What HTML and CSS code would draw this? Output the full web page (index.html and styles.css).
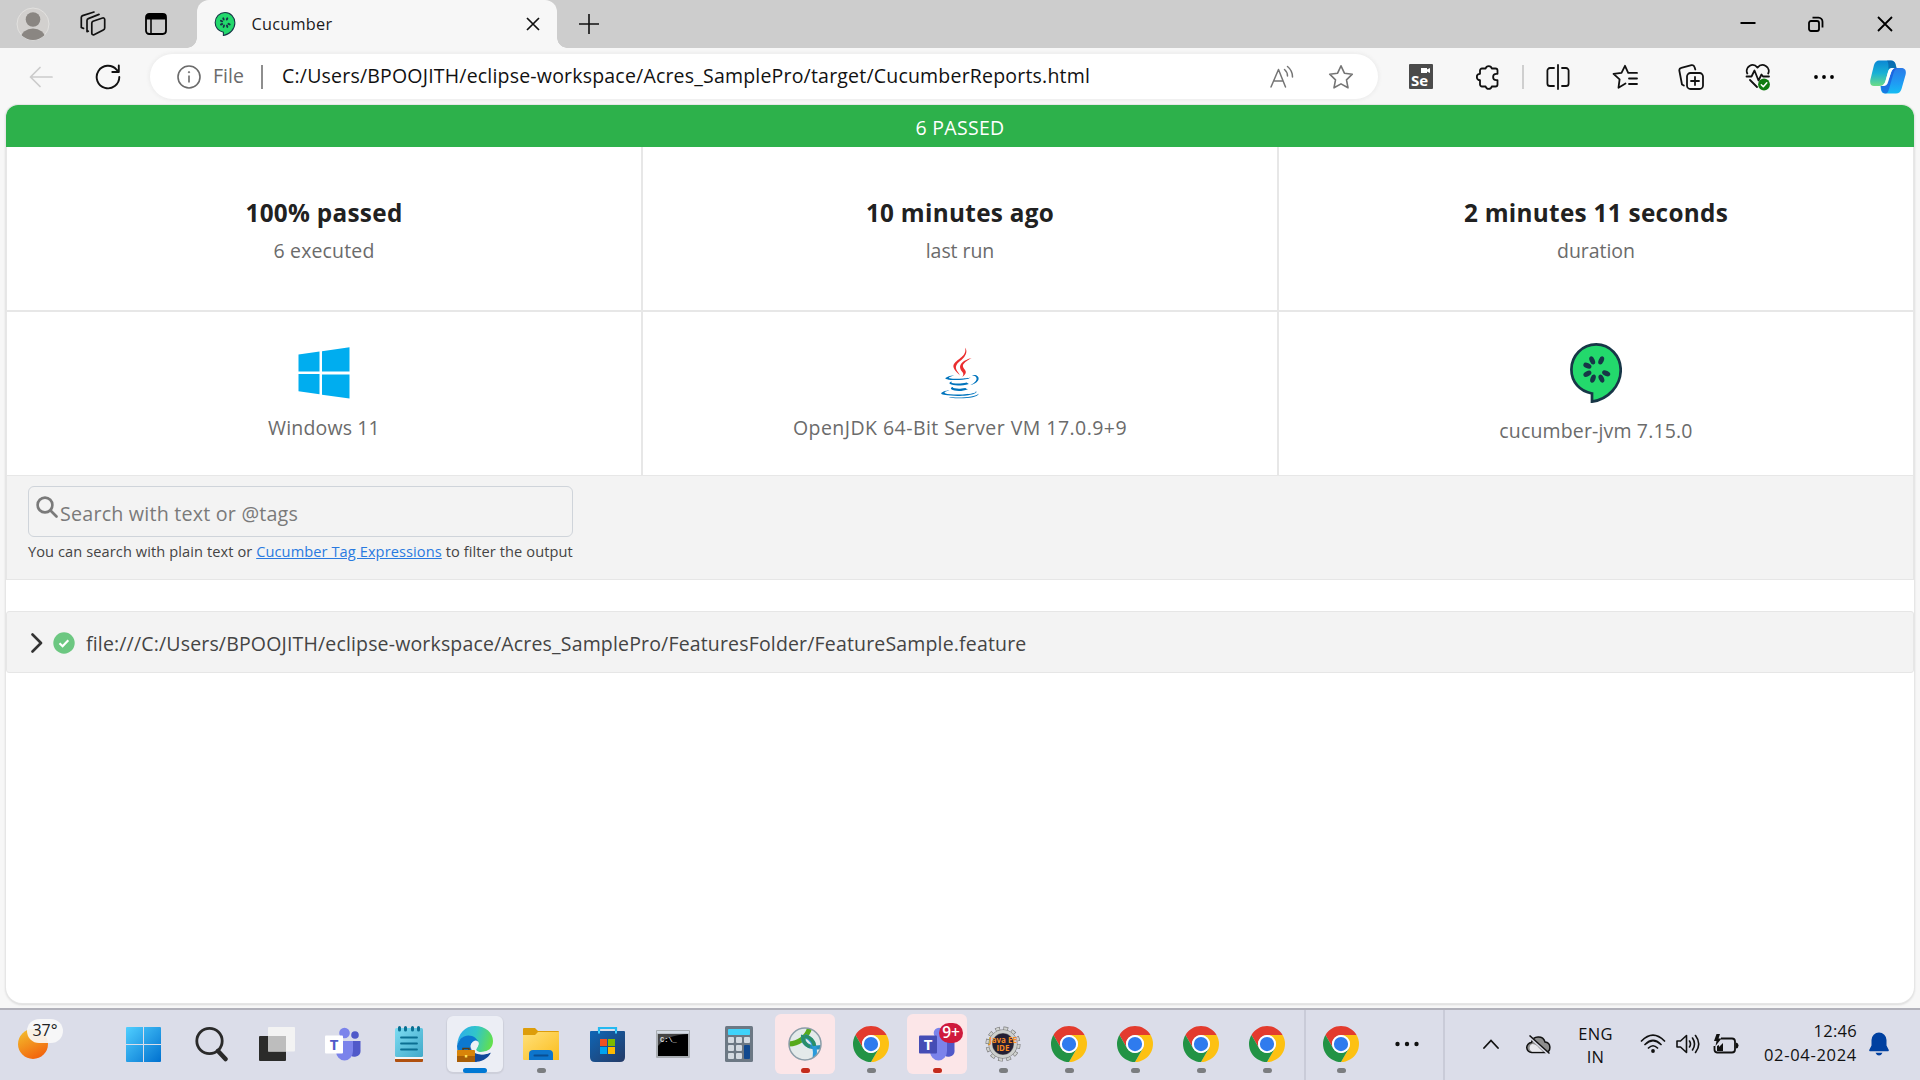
FILE: index.html
```html
<!DOCTYPE html>
<html lang="en">
<head>
<meta charset="utf-8">
<title>Cucumber</title>
<link rel="stylesheet" href="styles.css">
</head>
<body>
<svg class="defs" width="0" height="0" aria-hidden="true">
  <defs>
    <linearGradient id="winBlue" x1="0" y1="0" x2="1" y2="1"><stop offset="0" stop-color="#50cfff"/><stop offset="1" stop-color="#0070cf"/></linearGradient>
    <linearGradient id="sun" x1="0.2" y1="0" x2="0.7" y2="1"><stop offset="0" stop-color="#f3bd2c"/><stop offset="1" stop-color="#f2600c"/></linearGradient>
    <linearGradient id="folder" x1="0" y1="0" x2="1" y2="1"><stop offset="0" stop-color="#ffe07a"/><stop offset="1" stop-color="#fbbd1d"/></linearGradient>
    <linearGradient id="store" x1="0" y1="0" x2="1" y2="1"><stop offset="0" stop-color="#0f66b6"/><stop offset="1" stop-color="#243a66"/></linearGradient>
    <linearGradient id="edgeTop" x1="0" y1="0.3" x2="1" y2="0.5"><stop offset="0" stop-color="#2cadec"/><stop offset="0.5" stop-color="#31c5c9"/><stop offset="1" stop-color="#63e04c"/></linearGradient>
    <linearGradient id="note" x1="0" y1="0" x2="1" y2="1"><stop offset="0" stop-color="#7ddcf2"/><stop offset="1" stop-color="#41a9c9"/></linearGradient>
    <linearGradient id="copA" x1="0" y1="0" x2="0" y2="1"><stop offset="0" stop-color="#0a87d4"/><stop offset="0.5" stop-color="#19b1d5"/><stop offset="1" stop-color="#6cdc86"/></linearGradient>
    <linearGradient id="copB" x1="0" y1="0" x2="0" y2="1"><stop offset="0" stop-color="#2b7be8"/><stop offset="0.6" stop-color="#1f9cf4"/><stop offset="1" stop-color="#15bdf3"/></linearGradient>
    <symbol id="chrome" viewBox="0 0 48 48">
      <path fill="#e33b2e" d="M24 12H44.78A24 24 0 0 0 3.22 12L13.61 30A12 12 0 0 1 24 12z"/>
      <path fill="#fdc112" d="M34.39 30 24 48A24 24 0 0 0 44.78 12H24A12 12 0 0 1 34.39 30z"/>
      <path fill="#229345" d="M13.61 30 3.22 12A24 24 0 0 0 24 48L34.39 30A12 12 0 0 1 13.61 30z"/>
      <circle cx="24" cy="24" r="12" fill="#fff"/><circle cx="24" cy="24" r="9.5" fill="#2f7bee"/>
    </symbol>
    <symbol id="cuke" viewBox="0 0 52 60">
      <path d="M22 50.5C10 48.5 1.4 39 1.4 26.5 1.4 12.5 12.5 1.4 26.2 1.4 40 1.4 50.7 13 50.7 27 50.7 43 38 56.5 22 58.6Z" fill="#23d96c" stroke="#173647" stroke-width="2.7"/>
      <g fill="#173647">
        <ellipse cx="22.2" cy="17.4" rx="4.3" ry="2.5" transform="rotate(66 22.2 17.4)"/>
        <ellipse cx="31.2" cy="17.4" rx="4.3" ry="2.5" transform="rotate(-66 31.2 17.4)"/>
        <ellipse cx="17.4" cy="22.7" rx="4.3" ry="2.6" transform="rotate(25 17.4 22.7)"/>
        <ellipse cx="17.4" cy="30.7" rx="4.3" ry="2.6" transform="rotate(-28 17.4 30.7)"/>
        <ellipse cx="23" cy="35.6" rx="4.3" ry="2.5" transform="rotate(-70 23 35.6)"/>
        <ellipse cx="31.4" cy="35.6" rx="4.3" ry="2.5" transform="rotate(66 31.4 35.6)"/>
        <ellipse cx="36.2" cy="30.3" rx="4.3" ry="2.6" transform="rotate(25 36.2 30.3)"/>
      </g>
    </symbol>
  </defs>
</svg>

<header class="tabstrip">
  <span class="slot avatar-slot"><svg width="34" height="34" viewBox="0 0 34 34"><circle cx="17" cy="17" r="16" fill="#d2d0ce" stroke="#e2e1df" stroke-width="1"/><clipPath id="av"><circle cx="17" cy="17" r="16"/></clipPath><g fill="#8a8682" clip-path="url(#av)"><circle cx="17" cy="12.5" r="7.3"/><ellipse cx="17" cy="31" rx="12" ry="9.5"/></g></svg></span>
  <span class="slot work-slot"><svg width="26" height="26" viewBox="0 0 26 26" fill="none" stroke="#111" stroke-width="1.7" stroke-linejoin="round" stroke-linecap="round"><path d="M13 10.3 22.5 7a1.6 1.6 0 0 1 2.2 1.5V17a2 2 0 0 1-1.4 1.9L14 23.8a1.6 1.6 0 0 1-2.2-1.5V12a2 2 0 0 1 1.2-1.7z"/><path d="M8.3 20.2 7 20.6V9.5A2 2 0 0 1 8.3 7.6L19 3.4M3.5 17.4 1.3 16.5V6.5A2 2 0 0 1 2.6 4.6L14 1"/></svg></span>
  <span class="slot acts-slot"><svg width="22" height="22" viewBox="0 0 22 22"><rect x="1" y="1" width="20" height="20" rx="3.2" fill="none" stroke="#000" stroke-width="1.8"/><path d="M1 6.6V3.6A2.8 2.8 0 0 1 3.8 1H18.2A2.8 2.8 0 0 1 21 3.6v3z"/><path d="M6 6v15" stroke="#000" stroke-width="1.5"/></svg></span>
  <div class="tab">
    <svg class="favicon" width="22" height="24"><use href="#cuke"/></svg>
    <span class="tab-title">Cucumber</span>
    <svg class="tab-x" width="14" height="14" viewBox="0 0 14 14" stroke="#111" stroke-width="1.7"><path d="M1 1 13 13M13 1 1 13"/></svg>
  </div>
  <svg class="plus" width="22" height="22" viewBox="0 0 22 22" stroke="#111" stroke-width="1.6"><path d="M11 1v20M1 11h20"/></svg>
  <div class="win-controls">
    <span class="win"><svg width="16" height="16" viewBox="0 0 16 16" stroke="#000" stroke-width="2"><path d="M0.5 7h15"/></svg></span>
    <span class="win"><svg width="16" height="16" viewBox="0 0 16 16" fill="none" stroke="#000" stroke-width="1.8"><rect x="1" y="5" width="10" height="10" rx="2"/><path d="M4.5 1.6H10.5A4.2 4.2 0 0 1 14.500 5.800V11.500"/></svg></span>
    <span class="win"><svg width="16" height="16" viewBox="0 0 16 16" stroke="#000" stroke-width="1.8"><path d="M1 1 15 15M15 1 1 15"/></svg></span>
  </div>
</header>

<nav class="toolbar">
  <span class="slot back-slot"><svg width="24" height="22" viewBox="0 0 24 22" fill="none" stroke="#cbcbcb" stroke-width="1.7" stroke-linecap="round" stroke-linejoin="round"><path d="M11 1.500 1.500 11 11 20.500M1.500 11H23"/></svg></span>
  <span class="slot reload-slot"><svg width="26" height="26" viewBox="0 0 26 26" fill="none" stroke="#111" stroke-width="1.9" stroke-linecap="round" stroke-linejoin="round"><path d="M24.300 13A11.300 11.300 0 1 1 21.500 5.600L23.800 8M23.800 1.500V8H17.300"/></svg></span>
  <div class="address">
    <svg width="24" height="24" viewBox="0 0 24 24" fill="none" stroke="#6b6b6b" stroke-width="1.6"><circle cx="12" cy="12" r="11"/><path d="M12 10.500V17.500"/><circle cx="12" cy="7.200" r="0.700" fill="#6b6b6b" stroke-width="0.800"/></svg>
    <span class="scheme">File</span>
    <span class="bar"></span>
    <span class="url">C:/Users/BPOOJITH/eclipse-workspace/Acres_SamplePro/target/CucumberReports.html</span>
    <svg class="read" width="24" height="24" viewBox="0 0 24 24" fill="none" stroke="#757575" stroke-width="1.500" stroke-linecap="round" stroke-linejoin="round"><path d="M1 22 8.500 4.500 15.500 22M3.800 16H13M14.500 4.500Q17.500 7 17.500 11M17.500 1.500Q22.500 5.500 22.500 12"/></svg>
    <svg width="26" height="26" viewBox="0 0 26 26" fill="none" stroke="#757575" stroke-width="1.600" stroke-linejoin="round"><path d="M13 1.800 16.400 9.200 24.300 10.200 18.500 15.800 20 23.800 13 19.900 6 23.800 7.500 15.800 1.700 10.200 9.600 9.200z"/></svg>
  </div>
  <div class="tools">
    <span class="tool"><svg width="24" height="25" viewBox="0 0 24 25"><rect width="24" height="25" rx="1" fill="#4b4b4b"/><path d="M12 4h6v1.500l3-1.500v5l-3-1.500V9h-6z" fill="#fff"/><text x="2" y="21.500" class="se">Se</text></svg></span>
    <span class="tool"><svg width="24" height="26" viewBox="0 0 24 26" fill="none" stroke="#111" stroke-width="1.800" stroke-linejoin="round"><path d="M4 6.500A2 2 0 0 1 6 4.500H9.600A3.200 3.200 0 0 1 15.800 4.500H19.500A2 2 0 0 1 21.500 6.500V9.800H20.300A3.200 3.200 0 0 0 20.300 16.200H21.500V20.500A2 2 0 0 1 19.500 22.500H15.800A3.200 3.200 0 0 1 9.600 22.500H6A2 2 0 0 1 4 20.500V16.200A3.200 3.200 0 0 1 4 9.800z"/></svg></span>
    <span class="divider"></span>
    <span class="tool"><svg width="24" height="26" viewBox="0 0 24 26" fill="none" stroke="#111" stroke-width="1.800" stroke-linecap="round"><path d="M12 1V25M8 4H4A2.600 2.600 0 0 0 1.400 6.600V19.400A2.600 2.600 0 0 0 4 22H8M16 4H20A2.600 2.600 0 0 1 22.600 6.600V19.400A2.600 2.600 0 0 1 20 22H16"/></svg></span>
    <span class="tool"><svg width="26" height="26" viewBox="0 0 26 26" fill="none" stroke="#111" stroke-width="1.800" stroke-linecap="round" stroke-linejoin="round"><path d="M13.500 19.500 6.500 23.700 7.600 15.400 1.500 9.800 9.500 8.900 13 1.800 16.200 8.900H25M17 14.500H25M17 20H25"/></svg></span>
    <span class="tool"><svg width="26" height="26" viewBox="0 0 26 26" fill="none" stroke="#111" stroke-width="1.800" stroke-linecap="round" stroke-linejoin="round"><rect x="9" y="9" width="16" height="16" rx="3.500"/><path d="M17 13v8M13 17h8M5.800 21.500 4 20.500 1.400 7A2.600 2.600 0 0 1 3.300 3.900L13.500 1.200A2.400 2.400 0 0 1 16.500 3L17.300 5.500"/></svg></span>
    <span class="tool"><svg width="26" height="28" viewBox="0 0 26 28" fill="none" stroke="#111" stroke-width="1.800" stroke-linecap="round" stroke-linejoin="round"><path d="M2.300 10.500C-0.500 4.500 7.500-1.500 12.500 4.600 17.500-1.500 26 4.500 23.200 10.500M1.500 13.500H6.500L9.500 7.500 13.500 17.500 16.500 11.500 18 13.500H24M5 17 12 24"/><circle cx="19" cy="21.500" r="5.900" fill="#107c10" stroke="none"/><path d="M16.300 21.800 18.300 23.700 21.800 19.700" stroke="#fff" stroke-width="1.500"/></svg></span>
    <span class="tool"><svg width="20" height="6" viewBox="0 0 20 6"><circle cx="2" cy="3" r="1.900"/><circle cx="10" cy="3" r="1.900"/><circle cx="18" cy="3" r="1.900"/></svg></span>
    <span class="tool copilot"><svg width="36" height="34" viewBox="0 0 36 34"><path d="M27 8H31C35.500 8 36.500 11 35.500 15L31.500 29Q30 33.500 26 33.500H15Q12 33.500 11 30L10.500 26H14Q17 26 18 22.500L21 12Q22.500 8 27 8z" fill="url(#copB)"/><path d="M11 26 11.500 30Q12.500 33.500 16 33.500 18 33 19 29L23 15Q24 9 28 8H24L17 22Q16 26 11 26z" fill="#1749d5" opacity=".55"/><path d="M9 .5H21Q24.500.500 25.500 4L26.500 8H23Q19 8 18 12L15.500 21Q14 26 9 26H4Q-.5 26 .3 20L4 5Q5.500.5 9 .5z" fill="url(#copA)"/><path d="M17 .5H21Q24.500.500 25.500 4L26.500 8H21Q19 8 18.300 9Q19 3 17 .5z" fill="#07579b" opacity=".6"/><path d="M18.300 11Q19 8.500 21.500 8H24Q22 9 21 12.500L18 22Q17 26 13 26H12Q14.500 25 15.500 21z" fill="#fff"/></svg></span>
  </div>
</nav>

<main class="viewport">
  <article class="report">
    <div class="banner">6 PASSED</div>
    <section class="summary">
      <div class="cell"><strong>100% passed</strong><span class="sub">6 executed</span></div>
      <div class="cell"><strong>10 minutes ago</strong><span class="sub tight">last run</span></div>
      <div class="cell"><strong>2 minutes 11 seconds</strong><span class="sub tight">duration</span></div>
      <div class="cell"><svg class="os" width="52" height="52" viewBox="0 0 52 52" fill="#00adef"><path d="M0.500 7.500 21.500 4.500V24.500H0.500zM24 4.200 51.500 0.300V24.500H24zM0.500 27H21.500V47.200L0.500 44.300zM24 27.500H51.500V51.500L24 47.800z"/></svg><span class="sub">Windows 11</span></div>
      <div class="cell"><svg class="os" width="52" height="52" viewBox="0 0 128 128"><path fill="#0074bd" d="M47.617 98.120s-4.767 2.774 3.397 3.710c9.892 1.130 14.947.968 25.845-1.092 0 0 2.871 1.795 6.873 3.351-24.439 10.470-55.308-.607-36.115-5.969zm-2.988-13.665s-5.348 3.959 2.823 4.805c10.567 1.091 18.910 1.180 33.354-1.600 0 0 1.993 2.025 5.132 3.131-29.542 8.640-62.446.680-41.309-6.336z"/><path fill="#ea2d2e" d="M69.802 61.271c6.025 6.935-1.580 13.170-1.580 13.170s15.289-7.891 8.269-17.777c-6.559-9.215-11.587-13.792 15.635-29.580 0 .001-42.731 10.670-22.324 34.187z"/><path fill="#0074bd" d="M102.123 108.229s3.529 2.910-3.888 5.159c-14.102 4.272-58.706 5.560-71.094.171-4.451-1.938 3.899-4.625 6.526-5.192 2.739-.593 4.303-.485 4.303-.485-4.953-3.487-32.013 6.850-13.743 9.815 49.821 8.076 90.817-3.637 77.896-9.468zM49.912 70.294s-22.686 5.389-8.033 7.348c6.188.828 18.518.638 30.011-.326 9.390-.789 18.813-2.474 18.813-2.474s-3.308 1.419-5.704 3.053c-23.042 6.061-67.544 3.238-54.731-2.958 10.832-5.239 19.644-4.643 19.644-4.643zM90.609 93.041c23.421-12.167 12.591-23.860 5.032-22.285-1.848.385-2.677.720-2.677.720s.688-1.079 2-1.543c14.953-5.255 26.451 15.503-4.823 23.725 0-.002.359-.327.468-.617z"/><path fill="#ea2d2e" d="M76.491 1.587S89.459 14.563 64.188 34.510c-20.266 16.006-4.621 25.130-.007 35.559-11.831-10.673-20.509-20.070-14.688-28.815C58.041 28.420 81.722 22.195 76.491 1.587z"/><path fill="#0074bd" d="M52.214 126.021c22.476 1.437 57-.8 57.817-11.436 0 0-1.571 4.032-18.577 7.231-19.186 3.612-42.854 3.191-56.887.874 0 .001 2.875 2.381 17.647 3.331z"/></svg><span class="sub wide">OpenJDK 64-Bit Server VM 17.0.9+9</span></div>
      <div class="cell cuke-cell"><svg width="52" height="60"><use href="#cuke"/></svg><span class="sub">cucumber-jvm 7.15.0</span></div>
    </section>
    <section class="search">
      <div class="field">
        <svg width="22" height="22" viewBox="0 0 22 22" fill="none" stroke="#7a7a7a" stroke-width="2.600" stroke-linecap="round"><circle cx="9" cy="9" r="7.400"/><path d="M14.500 14.500 20.500 20.500"/></svg>
        <span class="placeholder">Search with text or @tags</span>
      </div>
      <p class="help">You can search with plain text or <a>Cucumber Tag Expressions</a> to filter the output</p>
    </section>
    <section class="feature">
      <svg width="12" height="20" viewBox="0 0 12 20" fill="none" stroke="#333" stroke-width="2.600" stroke-linecap="round" stroke-linejoin="round"><path d="M1.500 1.500 10 10 1.500 18.500"/></svg>
      <svg class="pass" width="22" height="22" viewBox="0 0 22 22"><circle cx="11" cy="11" r="10.700" fill="#6cc781"/><path d="M6.500 11.300 9.600 14.300 15.300 8.300" fill="none" stroke="#fff" stroke-width="2.200"/></svg>
      <span class="path">file:///C:/Users/BPOOJITH/eclipse-workspace/Acres_SamplePro/FeaturesFolder/FeatureSample.feature</span>
    </section>
  </article>
</main>

<footer class="taskbar">
  <div class="weather">
    <svg width="30" height="30" viewBox="0 0 30 30"><circle cx="15" cy="15" r="15" fill="url(#sun)"/></svg>
    <span class="temp">37°</span>
  </div>
  <div class="apps">
    <span class="app start"><svg width="35" height="35" viewBox="0 0 35 35" fill="url(#winBlue)"><path d="M0 1Q0 0 1 0H17V17H0zM18 0H34Q35 0 35 1V17H18zM0 18H17V35H1Q0 35 0 34zM18 18H35V34Q35 35 34 35H18z"/></svg></span>
    <span class="app"><svg width="34" height="36" viewBox="0 0 34 36" fill="none" stroke="#2a2a2a"><circle cx="15.500" cy="15" r="12.700" stroke-width="2.800"/><path d="M24 25 31.500 33" stroke-width="4.500" stroke-linecap="round"/></svg></span>
    <span class="app"><svg width="36" height="36" viewBox="0 0 36 36"><rect x="0" y="10" width="27" height="25" rx="1" fill="#2b2b2a"/><rect x="9" y="1" width="27" height="24.500" rx="1" fill="#f3f3f3"/><rect x="9" y="10" width="18" height="15.500" fill="#bdbdbd"/></svg></span>
    <span class="app"><svg width="36" height="36" viewBox="0 0 36 36"><circle cx="30" cy="9" r="3.800" fill="#5059c9"/><path d="M24 15H35.500V24A6 6 0 0 1 24 27z" fill="#5059c9"/><circle cx="19.500" cy="7" r="5.300" fill="#7b83eb"/><path d="M11 15H28V25A8.500 9.500 0 0 1 11 25z" fill="#7b83eb"/><rect x="0" y="9.500" width="18" height="18" rx="1" fill="#fff"/><text x="9" y="24" class="tee">T</text></svg></span>
    <span class="app"><svg width="28" height="36" viewBox="0 0 28 36"><rect x="0" y="30" width="28" height="6" rx="1" fill="#b0500f"/><rect x="0" y="28" width="28" height="5" fill="#f5f5f5"/><rect x="0" y="2" width="28" height="29" rx="1.500" fill="url(#note)"/><g stroke="#0b6f92" stroke-linecap="round"><path d="M6 11.500H22M6 17.500H22M6 23.500H22" stroke-width="1.800"/><path d="M4.500 1.500v2.500M10.500 1.500v2.500M17.500 1.500v2.500M23.500 1.500v2.500" stroke-width="3"/></g></svg></span>
    <span class="app active"><svg width="36" height="36" viewBox="0 0 36 36"><path d="M0 20C1 7 8 0 18 0 29 0 36 7 36 15 36 22 31 26 24 26 20 26 17.500 24.500 20 22 23 18 20 13 14 11 8 9 2 12 0 20z" fill="url(#edgeTop)"/><path d="M0 20C2 11 9 8 15 10 20 12 22 16 21 18 15 13 11 20 15 26L20 36H16C7 36 0 30 0 20z" fill="#0c78d0"/><path d="M14 20C13 27 22 31 34 26.500 31 33 24 36 17 36 13 33 12 26 14 20z" fill="#12499a"/><path d="M14 20C14.500 15.500 18 13 21 15.500 23 17.500 21 20 20 21.500 18 24 20 26 24 26 28 26 31 25 34 23.500L34.500 26C27 31 15 28 14 20z" fill="#eef0f6"/><rect x="0" y="24" width="18" height="12" rx="1" fill="#d88409"/><path d="M0 30h18v6H0z" fill="#a95e06"/><path d="M6 24v-1.500h6V24" fill="none" stroke="#5a3a10" stroke-width="1.500"/><rect x="7.800" y="29" width="2.500" height="2.500" fill="#ffe154"/></svg></span>
    <span class="app run"><svg width="36" height="34" viewBox="0 0 36 34"><path d="M0 2Q0 1 1 1H12L15 4H35Q36 4 36 5V12H0z" fill="#dd9d0a"/><path d="M0 8H12L15 5H36V33H1Q0 33 0 32z" fill="url(#folder)"/><path d="M6 33V27Q6 23 10 23H26Q30 23 30 27V33z" fill="#0d75cc"/><rect x="10.500" y="27.500" width="15" height="2" rx="1" fill="#094e92"/></svg></span>
    <span class="app"><svg width="35" height="36" viewBox="0 0 35 36"><path d="M9 8V2H26V8" fill="none" stroke="#24b9f1" stroke-width="2.200"/><path d="M0 6Q0 5 1 5H34Q35 5 35 6V31Q35 36 30 36H5Q0 36 0 31z" fill="url(#store)"/><path d="M9 5v2.500M26 5v2.500" stroke="#3fd0ff" stroke-width="2"/><path fill="#f25022" d="M10 13h7v7h-7z"/><path fill="#7fba00" d="M18 13h7v7h-7z"/><path fill="#00a4ef" d="M10 21h7v7h-7z"/><path fill="#ffb900" d="M18 21h7v7h-7z"/></svg></span>
    <span class="app"><svg width="34" height="28" viewBox="0 0 34 28"><rect width="34" height="28" rx="1" fill="#a9adb2"/><rect x="1" y="1" width="32" height="2.500" fill="#d5dce6"/><rect x="2" y="4" width="30" height="22" fill="#000"/><path d="M2 4H32Q10 5 2 16z" fill="#444"/><text x="4" y="12" class="cmd">C:\_</text></svg></span>
    <span class="app"><svg width="28" height="36" viewBox="0 0 28 36"><rect width="28" height="36" rx="1.500" fill="#6c7884"/><rect x="3" y="3" width="22" height="6" rx="0.800" fill="#3fd3fa"/><g fill="#d3dae1"><rect x="3" y="11" width="6" height="6" rx="1"/><rect x="11" y="11" width="6" height="6" rx="1"/><rect x="19" y="11" width="6" height="6" rx="1"/><rect x="3" y="19" width="6" height="6" rx="1"/><rect x="11" y="19" width="6" height="6" rx="1"/><rect x="3" y="27" width="6" height="6" rx="1"/><rect x="11" y="27" width="6" height="6" rx="1"/></g><rect x="19" y="19" width="6" height="14" rx="1" fill="#11498f"/></svg></span>
    <span class="app alert"><svg width="34" height="34" viewBox="0 0 34 34"><clipPath id="globe"><circle cx="17" cy="17" r="16"/></clipPath><circle cx="17" cy="17" r="16" fill="#e4eaea"/><g fill="none" clip-path="url(#globe)"><path d="M0 17C10 17 19 11 22 0" stroke="#57aa1c" stroke-width="5"/><path d="M15 8C14 17 21 22 34 20" stroke="#278fbd" stroke-width="4"/><path d="M26 34C28 24 28 13 17 9" stroke="#2a9bdc" stroke-width="4"/><path d="M15 8C14 13 17 18 22 20M17 9C22 10 26 14 26.500 19" stroke="#2b8f68" stroke-width="3.500"/></g><circle cx="17" cy="17" r="16" fill="none" stroke="#8b9da8" stroke-width="1.500"/></svg></span>
    <span class="app run"><svg width="36" height="36"><use href="#chrome"/></svg></span>
    <span class="app alert"><svg width="36" height="36" viewBox="0 0 36 36"><path d="M24 15H35.500V24A6 6 0 0 1 24 27z" fill="#5059c9"/><circle cx="20" cy="7" r="5.300" fill="#7b83eb"/><path d="M11 12H28V25A8.500 9.500 0 0 1 11 25z" fill="#7b83eb"/><rect x="0" y="9.500" width="18" height="18" rx="1" fill="#454db5"/><text x="9" y="24" class="tee light">T</text></svg><b class="badge">9+</b></span>
    <span class="app run"><svg width="36" height="36" viewBox="0 0 36 36"><circle cx="18" cy="18" r="15.500" fill="none" stroke="#777" stroke-width="4" stroke-dasharray="4.600 3.517"/><circle cx="18" cy="18" r="15.500" fill="none" stroke="#d0d2d0" stroke-width="2.800" stroke-dasharray="3.400 4.717" stroke-dashoffset="-.6"/><circle cx="18" cy="18" r="12.500" fill="#241f33" stroke="#777" stroke-width="4"/><circle cx="18" cy="18" r="12.500" fill="none" stroke="#cdcfcd" stroke-width="3"/><text x="18" y="17" class="ide">Java EE</text><text x="18" y="25" class="ide">IDE</text></svg></span>
    <span class="app run"><svg width="36" height="36"><use href="#chrome"/></svg></span>
    <span class="app run"><svg width="36" height="36"><use href="#chrome"/></svg></span>
    <span class="app run"><svg width="36" height="36"><use href="#chrome"/></svg></span>
    <span class="app run"><svg width="36" height="36"><use href="#chrome"/></svg></span>
    <span class="rule"></span>
    <span class="app run"><svg width="36" height="36"><use href="#chrome"/></svg></span>
    <span class="app"><svg width="24" height="6" viewBox="0 0 24 6" fill="#111"><circle cx="2.500" cy="3" r="2.200"/><circle cx="12" cy="3" r="2.200"/><circle cx="21.500" cy="3" r="2.200"/></svg></span>
    <span class="rule last"></span>
  </div>
  <div class="tray">
    <span class="t-chev"><svg width="16" height="10" viewBox="0 0 16 10" fill="none" stroke="#111" stroke-width="1.800" stroke-linecap="round"><path d="M1 9 8 1.500 15 9"/></svg></span>
    <span class="t-cloud"><svg width="26" height="20" viewBox="0 0 26 20"><path d="M6 17.500A5 5 0 0 1 5.500 7.500 7 7 0 0 1 19 7 5.300 5.300 0 0 1 19.500 17.500z" fill="#8e8e8e" stroke="#111" stroke-width="1.500"/><path d="M6 16.800A4.300 4.300 0 0 1 6 9Q10 9 13 13L17 16.800z" fill="#e9e9ee"/><path d="M3 1 23 19.500" stroke="#dcdde9" stroke-width="2.500"/><path d="M3.500 0.500 23.500 18.500" stroke="#111" stroke-width="1.500"/></svg></span>
    <span class="lang"><span>ENG</span><span>IN</span></span>
    <span class="t-wifi"><svg width="26" height="20" viewBox="0 0 26 20" fill="none" stroke="#111" stroke-width="1.700" stroke-linecap="round"><path d="M1.500 7Q13-4.500 24.500 7M5 10.500Q13 2.500 21 10.500M8.500 14Q13 9.500 17.500 14"/><circle cx="13" cy="17" r="1.900" fill="#111" stroke="none"/></svg></span>
    <span class="t-vol"><svg width="24" height="20" viewBox="0 0 24 20" fill="none" stroke="#111" stroke-width="1.600" stroke-linejoin="round" stroke-linecap="round"><path d="M1 7H4.500L10.500 1.500V18.500L4.500 13H1zM13.500 7Q15.500 10 13.500 13M16.500 4Q20.500 10 16.500 16M19.500 1.500Q26 10 19.500 18.500"/></svg></span>
    <span class="t-bat"><svg width="26" height="21" viewBox="0 0 26 21"><path d="M8 4.500H19A3 3 0 0 1 22 7.500V15.500A3 3 0 0 1 19 18.500H4A3 3 0 0 1 1.500 15.500V12" fill="none" stroke="#111" stroke-width="1.800"/><path d="M23 8.500Q25.500 9 25.500 11.500 25.500 14 23 14.500z" fill="#111"/><path d="M4 17V12L6 11V13L10 9V17z" fill="#111"/><path d="M3.500 0 1 7H3.500L2.500 12 8.500 4.500H5.500L7 0z" fill="#111"/></svg></span>
    <span class="clock"><span>12:46</span><span>02-04-2024</span></span>
    <svg class="bell" width="20" height="24" viewBox="0 0 20 24" fill="#0040a0"><path d="M10 0.500A7.500 7.500 0 0 1 17.500 8V13.500L19.800 18Q20 19.200 19 19.200H1Q0 19.200 0.200 18L2.500 13.500V8A7.500 7.500 0 0 1 10 0.500zM6.500 20.800H13.500Q12.500 23.500 10 23.500 7.500 23.500 6.500 20.800z"/></svg>
  </div>
</footer>
</body>
</html>
```
FILE: styles.css
```css
* { box-sizing: border-box; }
body {
  margin: 0;
  width: 1920px;
  height: 1080px;
  overflow: hidden;
  display: flex;
  flex-direction: column;
  background: #f7f7f7;
  font-family: "Open Sans", "Noto Sans", sans-serif;
  color: #111;
}
svg { display: block; flex: none; }
span, strong { white-space: nowrap; }
.defs { position: absolute; }
.slot { display: flex; justify-content: center; align-items: center; flex: none; }

/* Tab strip */
.tabstrip { display: flex; align-items: center; height: 48px; flex: none; background: #cdcdcd; }
.avatar-slot { width: 66px; }
.work-slot { width: 54px; }
.acts-slot { width: 72px; }
.tab {
  position: relative;
  display: flex;
  align-items: center;
  width: 360px;
  height: 48px;
  margin-left: 4.500px;
  padding: 0 17px;
  background: #f7f7f7;
  border-radius: 12px 12px 0 0;
}
.tab::before, .tab::after {
  content: "";
  position: absolute;
  bottom: 0;
  width: 10px;
  height: 10px;
}
.tab::before { left: -10px; background: radial-gradient(circle at 0 0, #cdcdcd 9.5px, #f7f7f7 10px); }
.tab::after { right: -10px; background: radial-gradient(circle at 100% 0, #cdcdcd 9.5px, #f7f7f7 10px); }
.tab-title { margin-left: 16px; font-size: 16.300px; letter-spacing: .25px; color: #1b1b1b; }
.tab-x { margin-left: auto; }
.plus { margin-left: 21px; }
.win-controls { display: flex; margin-left: auto; margin-right: 1px; }
.win { display: flex; justify-content: center; align-items: center; width: 68.5px; height: 48px; }

/* Toolbar */
.toolbar { display: flex; align-items: center; height: 57px; flex: none; }
.back-slot { width: 82px; }
.reload-slot { width: 52px; }
.address {
  display: flex;
  align-items: center;
  width: 1228px;
  height: 45px;
  margin-left: 16px;
  padding: 0 24px 0 27px;
  background: #fff;
  border-radius: 23px;
  box-shadow: 0 0 3px 2px #efefef;
}
.scheme { width: 31px; margin-left: 12px; font-size: 19.500px; color: #6b6b6b; }
.bar { width: 2px; height: 24px; margin: 0 19px 0 17px; background: #8e8e8e; }
.url { font-size: 19.500px; letter-spacing: .2px; color: #111; }
.scheme, .url { margin-top: -2px; }
.read { margin: 0 34px 0 auto; }
.tools { display: flex; align-items: center; margin-left: 10px; }
.tool { display: flex; justify-content: center; width: 66.500px; }
.divider { width: 2px; height: 24px; margin: 0 1px; background: #cfcfcf; }
.copilot { width: 60px; }
.se { font: bold 15px "Open Sans", sans-serif; fill: #fff; }

/* Report page */
.viewport { flex: none; height: 903px; padding: 0 6px 5px; }
.report {
  height: 898px;
  background: #fff;
  border-radius: 12px 12px 16px 16px;
  box-shadow: 0 0 0 1px #e6e6e6, 0 1px 2px 1px #dcdcdc;
  overflow: hidden;
}
.banner {
  display: flex;
  justify-content: center;
  align-items: center;
  height: 42px;
  padding-top: 2px;
  background: #2db14b;
  color: #fff;
  font-size: 19.500px;
  letter-spacing: .3px;
}
.summary {
  display: grid;
  grid-template-columns: 634px 634px 634px;
  grid-template-rows: 163px 163px;
  gap: 2px;
  padding: 0 1px;
  background: #e7e7e7;
  border-bottom: 1px solid #e7e7e7;
}
.cell { display: flex; flex-direction: column; align-items: center; background: #fff; padding-top: 49px; }
.cell strong { font-size: 24.300px; line-height: 34px; letter-spacing: .3px; color: #212121; }
.sub { font-size: 19.500px; line-height: 30px; letter-spacing: .15px; color: #6b6b6b; }
.sub.tight { letter-spacing: -.05px; }
.sub.wide { letter-spacing: .45px; }
.cell strong + .sub { margin-top: 6px; }
.os { margin-top: -14px; }
.os + .sub { margin-top: 14px; }
.cuke-cell svg { margin-top: -18px; }
.cuke-cell .sub { margin-top: 13px; }

.search { height: 104px; padding: 10px 21px; background: #f3f3f3; border: 1px solid #e6e6e6; border-top: 0; }
.field {
  display: flex;
  align-items: center;
  width: 545px;
  height: 51px;
  padding-left: 7px;
  border: 1px solid #cfd4da;
  border-radius: 6px;
}
.field svg { margin-bottom: 9px; }
.placeholder { margin: 4px 0 0 2px; font-size: 19.700px; letter-spacing: .2px; color: #7a7a7a; }
.help { margin: 3px 0 0; font-size: 14.600px; line-height: 22px; letter-spacing: .09px; color: #444; white-space: nowrap; }
.help a { color: #2a7ae0; text-decoration: underline; }

.feature {
  display: flex;
  align-items: center;
  height: 62px;
  margin-top: 31px;
  padding-left: 24px;
  padding-top: 2px;
  background: #f3f3f3;
  border: 1px solid #e6e6e6;
  border-radius: 3px;
}
.pass { margin-left: 10px; }
.path { margin-left: 11px; font-size: 19.500px; letter-spacing: .165px; color: #444; }

/* Taskbar */
.taskbar {
  display: flex;
  height: 72px;
  flex: none;
  border-top: 2px solid #b1b1ba;
  background: #dbdde9;
}
.weather { position: relative; width: 110px; padding: 19px 0 0 18px; }
.temp {
  position: absolute;
  left: 27px;
  top: 9px;
  width: 36px;
  height: 24px;
  border-radius: 12px;
  background: rgba(250, 250, 250, .9);
  text-align: center;
  font-size: 16px;
  line-height: 23px;
  color: #222;
}
.apps { display: flex; }
.app { position: relative; display: flex; justify-content: center; align-items: center; width: 66px; height: 68px; }
.app.start { width: 68px; padding-right: 2px; }
.app svg { position: relative; }
.app.run::after, .app.active::after, .app.alert::after {
  content: "";
  position: absolute;
  left: 29px;
  top: 58px;
  width: 9px;
  height: 5px;
  border-radius: 2.500px;
  background: #7b7d80;
}
.app.active::after { left: 21px; width: 24px; background: #0078d4; }
.app.alert::after { background: #c42b1c; }
.app.active::before, .app.alert::before { content: ""; position: absolute; border-radius: 6px; }
.app.active::before { left: 5px; top: 6px; width: 56px; height: 56px; background: #eceef5; box-shadow: 0 1px 1px 1px #cdcfda; }
.app.alert::before { left: 3px; top: 4px; width: 60px; height: 60px; background: #fce6e8; }
.badge {
  position: absolute;
  left: 35px;
  top: 13px;
  width: 24px;
  height: 20px;
  border-radius: 10px;
  background: #cf1a3c;
  color: #fff;
  text-align: center;
  font-size: 15.500px;
  font-weight: 600;
  line-height: 19px;
}
.tee { font: bold 15px "Open Sans", sans-serif; fill: #5059c9; text-anchor: middle; }
.tee.light { fill: #fff; }
.cmd { font: bold 7px "Liberation Mono", monospace; fill: #ddd; }
.ide { font: bold 8px "Open Sans", sans-serif; fill: #f58a23; text-anchor: middle; }
.rule { width: 2px; height: 70px; margin: 0 2px 0 4px; background: #c9cbd8; }
.rule.last { margin: 0 2px 0 3px; }
.tray { display: flex; align-items: center; height: 68px; flex: 1; }
.t-chev { margin-left: 36px; }
.t-cloud { margin-left: 27px; margin-top: 2px; }
.lang { display: flex; flex-direction: column; align-items: center; width: 35px; margin-left: 26px; padding-top: 1px; font-size: 16.500px; line-height: 23px; letter-spacing: .3px; }
.t-wifi { margin-left: 27px; }
.t-vol { margin-left: 10px; }
.t-bat { margin-left: 13px; }
.clock { display: flex; flex-direction: column; align-items: flex-end; width: 94px; margin-left: 24px; margin-top: -2px; font-size: 16.500px; line-height: 24px; letter-spacing: .3px; }
.clock span:last-child { letter-spacing: .7px; }
.bell { margin-left: 12px; }
```
